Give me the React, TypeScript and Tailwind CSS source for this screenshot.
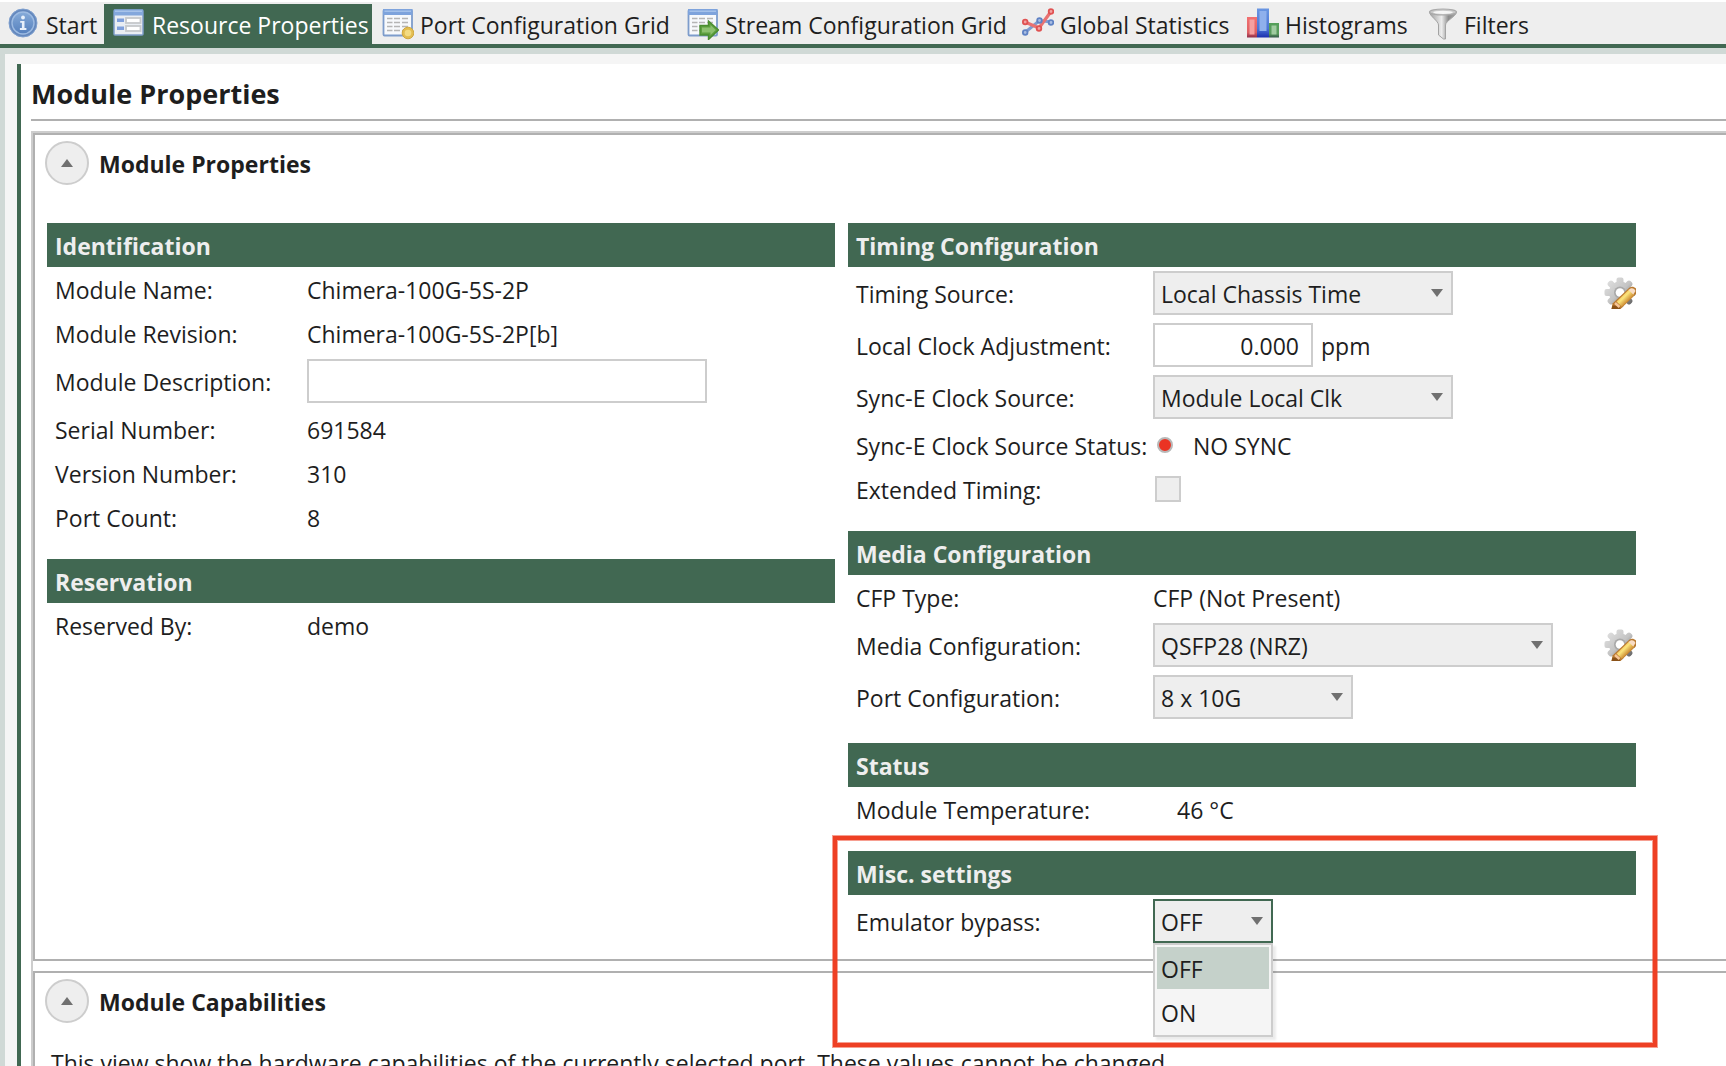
import { useState } from "react";
import type { ReactNode } from "react";

/* ---------- toolbar icons ---------- */

function InfoIcon() {
  return (
    <svg viewBox="0 0 32 32" className="w-8 h-8 shrink-0" aria-hidden="true">
      <defs>
        <linearGradient id="infoFill" x1="0" y1="0" x2="0" y2="1">
          <stop offset="0" stopColor="#86abd9" />
          <stop offset="1" stopColor="#5580bd" />
        </linearGradient>
      </defs>
      <circle cx="15" cy="15" r="14" fill="#6488bd" stroke="#7fa0cf" strokeWidth="1" />
      <circle cx="15" cy="15" r="11" fill="url(#infoFill)" stroke="#9dbbe2" strokeWidth="1.4" />
      <g fill="#e9f1fb">
        <circle cx="15" cy="9.5" r="1.900" />
        <path d="M12.200 13h4.300v7h1.900v1.900h-6.500V20h2v-5.200h-1.700z" />
      </g>
    </svg>
  );
}

function FormIcon() {
  return (
    <svg viewBox="0 0 32 32" className="w-8 h-8 shrink-0" aria-hidden="true">
      <rect x="2" y="2" width="29" height="25" rx="1" fill="#e9edf3" stroke="#7f9dca" strokeWidth="1.500" />
      <rect x="2" y="1.500" width="29" height="6" fill="#83a7dc" />
      <rect x="3" y="2.500" width="27" height="1.500" fill="#a7c3ea" />
      <rect x="5" y="10.500" width="7" height="3.500" fill="#7f9fdc" />
      <rect x="5" y="18.500" width="7" height="3.500" fill="#7f9fdc" />
      <rect x="14" y="10" width="14.500" height="5" fill="#fff" stroke="#c6c8cb" strokeWidth="1.800" />
      <rect x="14" y="18" width="14.500" height="5" fill="#fff" stroke="#c6c8cb" strokeWidth="1.800" />
    </svg>
  );
}

function TableBase() {
  return (
    <>
      <rect x="1.500" y="2" width="28.500" height="25.500" rx="1" fill="#f7f9fc" stroke="#7d9ccb" strokeWidth="1.800" />
      <rect x="1" y="1" width="29.500" height="6" fill="#7ea3dc" />
      <rect x="2.500" y="2.500" width="26.500" height="1.500" fill="#a4c1ea" />
      <path d="M5 10.500h5.500M12 10.500h6M20 10.500h6M5 14.500h5.500M12 14.500h6M20 14.500h6M5 18.500h5.500M12 18.500h6M20 18.500h6M5 22.500h5.500M12 22.500h6M20 22.500h6" stroke="#b5b5b5" strokeWidth="1.700" />
    </>
  );
}

function PortGridIcon() {
  return (
    <svg viewBox="0 0 32 32" className="w-8 h-8 shrink-0" aria-hidden="true">
      <TableBase />
      <circle cx="26" cy="25" r="5.800" fill="#e3bd50" stroke="#d0a840" strokeWidth="1" />
      <circle cx="26" cy="25" r="3.300" fill="#f3db82" />
    </svg>
  );
}

function StreamGridIcon() {
  return (
    <svg viewBox="0 0 32 32" className="w-8 h-8 shrink-0" aria-hidden="true">
      <TableBase />
      <path d="M13 17.500h8.500v-4.500l10 9-10 9.500v-4.500H13z" fill="#5d9f3f" stroke="#4a8d30" strokeWidth="1.400" />
      <path d="M15 19.500h8.500v-2.500l5.300 5-5.300 5v-2.500H15z" fill="#8cc06e" />
    </svg>
  );
}

function StatisticsIcon() {
  return (
    <svg viewBox="0 0 32 32" className="w-8 h-8 shrink-0" aria-hidden="true">
      <path d="M3 24.500L17.500 12.500 29 14" fill="none" stroke="#7f9cd0" strokeWidth="3" />
      <path d="M3 14L17 20 29 3.500" fill="none" stroke="#e87272" strokeWidth="3.200" />
      <g fill="#a9bde2" stroke="#5f82c4" strokeWidth="1.800">
        <circle cx="3.200" cy="24.500" r="2.300" />
        <circle cx="17.500" cy="12.500" r="2.300" />
        <circle cx="29" cy="14.500" r="2.300" />
      </g>
      <g fill="#f3a1a1" stroke="#e05252" strokeWidth="1.800">
        <circle cx="3.200" cy="14" r="2.300" />
        <circle cx="17" cy="20.500" r="2.300" />
        <circle cx="29" cy="3.500" r="2.300" />
      </g>
    </svg>
  );
}

function HistogramIcon() {
  return (
    <svg viewBox="0 0 32 32" className="w-8 h-8 shrink-0" aria-hidden="true">
      <defs>
        <linearGradient id="barRed" x1="0" y1="0" x2="0" y2="1">
          <stop offset="0" stopColor="#f27070" />
          <stop offset="0.750" stopColor="#dd6064" />
          <stop offset="1" stopColor="#8f2f4a" />
        </linearGradient>
        <linearGradient id="barBlue" x1="0" y1="0" x2="0" y2="1">
          <stop offset="0" stopColor="#6a96e2" />
          <stop offset="0.700" stopColor="#4a74d6" />
          <stop offset="1" stopColor="#1c2fae" />
        </linearGradient>
        <linearGradient id="barGreen" x1="0" y1="0" x2="0" y2="1">
          <stop offset="0" stopColor="#559f5a" />
          <stop offset="0.750" stopColor="#599a5d" />
          <stop offset="1" stopColor="#33554a" />
        </linearGradient>
      </defs>
      <rect x="0" y="9" width="10" height="20.500" fill="url(#barRed)" />
      <rect x="2.500" y="11.500" width="5" height="15" fill="#f5a0a0" />
      <rect x="22" y="15" width="10" height="14.500" fill="url(#barGreen)" />
      <rect x="24.500" y="17.500" width="5" height="9" fill="#a0cba1" />
      <rect x="10" y="0.500" width="12" height="29" fill="url(#barBlue)" />
      <rect x="12.500" y="3" width="7" height="20" fill="#8fb0ec" />
    </svg>
  );
}

function FilterIcon() {
  return (
    <svg viewBox="0 0 32 32" className="w-8 h-8 shrink-0" aria-hidden="true">
      <defs>
        <linearGradient id="funnel" x1="0" y1="0" x2="1" y2="0">
          <stop offset="0" stopColor="#9c9c9c" />
          <stop offset="0.450" stopColor="#ededed" />
          <stop offset="0.700" stopColor="#8c8c8c" />
          <stop offset="1" stopColor="#a8a8a8" />
        </linearGradient>
      </defs>
      <path d="M1.500 4C1.500 8 10.500 13 10.500 17v10l5 4h2V17c0-4 11-9 11-13z" fill="url(#funnel)" stroke="#a3a3a3" strokeWidth="1" />
      <ellipse cx="15" cy="4" rx="13.500" ry="3" fill="#c9c9c9" stroke="#a9a9a9" strokeWidth="1.200" />
      <ellipse cx="15" cy="4.300" rx="10" ry="1.600" fill="#f6f6f6" />
    </svg>
  );
}

function GearPencilIcon() {
  return (
    <svg viewBox="0 0 32 32" className="w-8 h-8" aria-hidden="true">
      <defs>
        <linearGradient id="gearFill" gradientUnits="userSpaceOnUse" x1="4" y1="3" x2="28" y2="28">
          <stop offset="0" stopColor="#dedede" />
          <stop offset="0.500" stopColor="#c4c4c4" />
          <stop offset="1" stopColor="#5e5e5e" />
        </linearGradient>
        <linearGradient id="pencilFill" gradientUnits="userSpaceOnUse" x1="16" y1="17" x2="24" y2="25">
          <stop offset="0" stopColor="#eda94a" />
          <stop offset="0.450" stopColor="#fbe57c" />
          <stop offset="1" stopColor="#c8832c" />
        </linearGradient>
      </defs>
      <g fill="url(#gearFill)">
        <circle cx="16" cy="15.500" r="11" />
        <path d="M12.500 6V2.500q0-2 2-2h3q2 0 2 2V6zM12.500 25v3.500q0 2 2 2h3q2 0 2-2V25zM6.500 12H2.500q-2 0-2 2v3q0 2 2 2h4zM25.500 12h4q2 0 2 2v3q0 2-2 2h-4zM7 11.500L4 8.500q-1.200-1.500 0-3L5.500 4q1.500-1.200 3 0l3 3zM25 11.500l3-3q1.200-1.500 0-3L26.500 4q-1.500-1.200-3 0l-3 3zM7 19.500l-3 3q-1.200 1.500 0 3L5.500 27q1.500 1.200 3 0l3-3zM25 19.500l3 3q1.200 1.500 0 3L26.500 27q-1.500 1.200-3 0l-3-3z" />
      </g>
      <circle cx="16" cy="15.500" r="6" fill="#a9a9a9" />
      <circle cx="16" cy="15.500" r="4.300" fill="#fff" />
      <path d="M7.500 32l1-5.500L25.500 10.500c2-1.500 4.500-1 6.500 1v5.500L16.500 32z" fill="#b9792f" />
      <path d="M12.500 24.500L25 12.500l5.500 5.500-12.500 12z" fill="url(#pencilFill)" />
      <path d="M24.500 13l2-1.500c2-1 4.500.5 5 2.500l-2.200 3.500z" fill="#f8dcc4" />
      <path d="M7.500 32l1-3.500 6 .5 2 3z" fill="#8a5218" />
      <path d="M11 26l4.500 4" stroke="#f6c596" strokeWidth="2.500" />
    </svg>
  );
}

/* ---------- building blocks ---------- */

const TABS = [
  { label: "Start", icon: <InfoIcon />, size: "w-[104px] pl-2 gap-1.5" },
  { label: "Resource Properties", icon: <FormIcon />, size: "w-[268px] pl-2 gap-2" },
  { label: "Port Configuration Grid", icon: <PortGridIcon />, size: "w-[305px] pl-2.5 gap-1.5" },
  { label: "Stream Configuration Grid", icon: <StreamGridIcon />, size: "w-[335px] pl-2.5 gap-1.5" },
  { label: "Global Statistics", icon: <StatisticsIcon />, size: "w-[225px] pl-2.5 gap-1.5" },
  { label: "Histograms", icon: <HistogramIcon />, size: "w-[181px] pl-2.5 gap-1.5" },
  { label: "Filters", icon: <FilterIcon />, size: "w-[120px] pl-2.5 gap-1" },
];

function GroupTitle({ children }: { children: ReactNode }) {
  return (
    <h3 className="h-11 px-2 pt-0.5 flex items-center bg-[#416852] text-[#eeeeee] text-[23px] font-bold">
      {children}
    </h3>
  );
}

function Row({ label, htmlFor, tall, side, children }: {
  label: string;
  htmlFor?: string;
  tall?: boolean;
  side?: boolean;
  children: ReactNode;
}) {
  return (
    <div className={`flex items-center ${tall ? "h-[52px]" : "h-11"}`}>
      <label htmlFor={htmlFor} className={`pl-2 pt-0.5 shrink-0 whitespace-nowrap ${side ? "w-[305px]" : "w-[260px]"}`}>
        {label}
      </label>
      {children}
    </div>
  );
}

function Value({ children }: { children: ReactNode }) {
  return <span className="pt-0.5 whitespace-nowrap">{children}</span>;
}

function Combo({ id, value, onChange, options, width, open, onToggle }: {
  id: string;
  value: string;
  onChange: (v: string) => void;
  options: string[];
  width: string;
  open?: boolean;
  onToggle?: () => void;
}) {
  return (
    <div className={`relative ${width}`}>
      <select
        id={id}
        value={value}
        onChange={e => onChange(e.target.value)}
        onMouseDown={e => {
          if (onToggle) {
            e.preventDefault();
            onToggle();
          }
        }}
        className={`appearance-none block w-full h-11 pl-1.5 pr-8 pt-0.5 border-2 bg-[#eeeeee] outline-none ${open ? "border-[#416852]" : "border-[#cdcdcd]"}`}
      >
        {options.map(o => <option key={o}>{o}</option>)}
      </select>
      <svg viewBox="0 0 12 8" className="absolute right-2.5 top-[18px] w-3 h-2 pointer-events-none" aria-hidden="true">
        <path d="M0 0h12L6 8z" fill="#707070" />
      </svg>
      {open && (
        <ul className="absolute z-10 left-0 top-full w-full p-0.5 flex flex-col gap-0.5 border-2 border-[#cdcdcd] bg-[#f5f5f5] shadow-[3px_3px_2px_rgba(0,0,0,0.08)]">
          {options.map(o => (
            <li key={o}>
              <button
                onClick={() => onChange(o)}
                className={`block w-full h-[42px] pl-1 pt-0.5 text-left ${o === value ? "bg-[#c5d1ca]" : ""}`}
              >
                {o}
              </button>
            </li>
          ))}
        </ul>
      )}
    </div>
  );
}

function SettingsButton({ label }: { label: string }) {
  return (
    <button aria-label={label} className="ml-auto">
      <GearPencilIcon />
    </button>
  );
}

function PanelHeader({ title, onClick }: { title: string; onClick: () => void }) {
  return (
    <div className="flex items-center gap-2.5 pl-2.5 pt-1.5">
      <button
        onClick={onClick}
        aria-label={`Toggle ${title}`}
        className="w-11 h-11 rounded-full border-2 border-[#cdcdcd] bg-[#eeeeee] flex items-center justify-center"
      >
        <svg viewBox="0 0 12 8" className="w-3 h-2" aria-hidden="true">
          <path d="M0 8h12L6 0z" fill="#707070" />
        </svg>
      </button>
      <h2 className="pt-0.5 text-[23px] font-bold">{title}</h2>
    </div>
  );
}

/* ---------- page ---------- */

export default function App() {
  const [tab, setTab] = useState("Resource Properties");
  const [showProps, setShowProps] = useState(true);
  const [showCaps, setShowCaps] = useState(true);
  const [description, setDescription] = useState("");
  const [timing, setTiming] = useState("Local Chassis Time");
  const [clockAdj, setClockAdj] = useState("0.000");
  const [syncE, setSyncE] = useState("Module Local Clk");
  const [extended, setExtended] = useState(false);
  const [media, setMedia] = useState("QSFP28 (NRZ)");
  const [ports, setPorts] = useState("8 x 10G");
  const [bypass, setBypass] = useState("OFF");
  const [bypassOpen, setBypassOpen] = useState(true);

  return (
    <div className="h-screen flex flex-col overflow-hidden bg-[#d0d9d6] text-[#1e1e1e] text-[23px] leading-8 font-['Open_Sans','Noto_Sans',sans-serif]">
      {/* Tabs */}
      <nav className="shrink-0 flex h-12 pt-0.5 border-t-2 border-t-white border-b-4 border-b-[#416852] bg-[#eeeeee]">
        {TABS.map(t => (
          <button
            key={t.label}
            onClick={() => setTab(t.label)}
            className={`shrink-0 flex items-center whitespace-nowrap ${t.size} ${tab === t.label ? "bg-[#416852] text-white" : ""}`}
          >
            {t.icon}
            <span className="pt-0.5">{t.label}</span>
          </button>
        ))}
      </nav>

      <div className="flex-1 min-h-0 mt-1.5 ml-[5px] pt-2.5 pl-3 bg-[#f5f5f5]">
        <main className="h-full pl-2.5 border-l-4 border-[#416852] bg-white">
          <h1 className="h-[57px] pt-3.5 border-b-2 border-[#b0b0b0] text-[27px] font-bold">Module Properties</h1>

          <div className="mt-2.5 border-l-2 border-t-2 border-[#cdcdcd]">
            {/* Module Properties */}
            <section className="border-2 border-r-0 border-[#b0b0b0]">
              <PanelHeader title="Module Properties" onClick={() => setShowProps(!showProps)} />
              {showProps && (
                <div className="grid grid-cols-[minmax(0,788px)_minmax(0,788px)] gap-x-[13px] items-start pt-[38px] pl-3 pb-3">
                  <div className="flex flex-col gap-5">
                    <section>
                      <GroupTitle>Identification</GroupTitle>
                      <Row label="Module Name:"><Value>Chimera-100G-5S-2P</Value></Row>
                      <Row label="Module Revision:"><Value>Chimera-100G-5S-2P[b]</Value></Row>
                      <Row label="Module Description:" htmlFor="description" tall>
                        <input
                          id="description"
                          value={description}
                          onChange={e => setDescription(e.target.value)}
                          className="w-[400px] h-11 px-2 border-2 border-[#cdcdcd] bg-white outline-none"
                        />
                      </Row>
                      <Row label="Serial Number:"><Value>691584</Value></Row>
                      <Row label="Version Number:"><Value>310</Value></Row>
                      <Row label="Port Count:"><Value>8</Value></Row>
                    </section>
                    <section>
                      <GroupTitle>Reservation</GroupTitle>
                      <Row label="Reserved By:"><Value>demo</Value></Row>
                    </section>
                  </div>

                  <div className="flex flex-col gap-5">
                    <section>
                      <GroupTitle>Timing Configuration</GroupTitle>
                      <Row label="Timing Source:" htmlFor="timing" tall side>
                        <Combo id="timing" value={timing} onChange={setTiming} options={["Local Chassis Time"]} width="w-[300px]" />
                        <SettingsButton label="Timing settings" />
                      </Row>
                      <Row label="Local Clock Adjustment:" htmlFor="clock" tall side>
                        <input
                          id="clock"
                          value={clockAdj}
                          onChange={e => setClockAdj(e.target.value)}
                          className="w-40 h-11 pr-3 pt-0.5 mr-2 border-2 border-[#cdcdcd] bg-white text-right outline-none"
                        />
                        <Value>ppm</Value>
                      </Row>
                      <Row label="Sync-E Clock Source:" htmlFor="synce" tall side>
                        <Combo id="synce" value={syncE} onChange={setSyncE} options={["Module Local Clk"]} width="w-[300px]" />
                      </Row>
                      <Row label="Sync-E Clock Source Status:" side>
                        <span className="w-4 h-4 ml-1 mr-5 rounded-full border-2 border-[#b8b8b8] bg-[#ea3323]" />
                        <Value>NO SYNC</Value>
                      </Row>
                      <Row label="Extended Timing:" htmlFor="extended" side>
                        <input
                          id="extended"
                          type="checkbox"
                          checked={extended}
                          onChange={e => setExtended(e.target.checked)}
                          className="appearance-none w-[26px] h-[26px] ml-0.5 border-2 border-[#cdcdcd] bg-[#eeeeee] checked:bg-[#416852]"
                        />
                      </Row>
                    </section>

                    <section>
                      <GroupTitle>Media Configuration</GroupTitle>
                      <Row label="CFP Type:" side><Value>CFP (Not Present)</Value></Row>
                      <Row label="Media Configuration:" htmlFor="media" tall side>
                        <Combo id="media" value={media} onChange={setMedia} options={["QSFP28 (NRZ)"]} width="w-[400px]" />
                        <SettingsButton label="Media settings" />
                      </Row>
                      <Row label="Port Configuration:" htmlFor="ports" tall side>
                        <Combo id="ports" value={ports} onChange={setPorts} options={["8 x 10G"]} width="w-[200px]" />
                      </Row>
                    </section>

                    <section>
                      <GroupTitle>Status</GroupTitle>
                      <Row label="Module Temperature:" side>
                        <span className="pl-6 pt-0.5">46 °C</span>
                      </Row>
                    </section>

                    <section className="relative">
                      {/* highlight frame, runs over the next panel */}
                      <div className="absolute z-20 -left-[15px] -right-[21px] -top-[15px] h-[211px] border-4 border-[#ee4024] shadow-[0_0_0_1px_rgba(238,64,36,0.5),inset_0_0_0_1px_rgba(238,64,36,0.5)] pointer-events-none" />
                      <GroupTitle>Misc. settings</GroupTitle>
                      <Row label="Emulator bypass:" htmlFor="bypass" tall side>
                        <Combo
                          id="bypass"
                          value={bypass}
                          onChange={v => { setBypass(v); setBypassOpen(false); }}
                          options={["OFF", "ON"]}
                          width="w-[120px]"
                          open={bypassOpen}
                          onToggle={() => setBypassOpen(!bypassOpen)}
                        />
                      </Row>
                    </section>
                  </div>
                </div>
              )}
            </section>

            {/* Module Capabilities */}
            <section className="mt-2.5 border-2 border-r-0 border-b-0 border-[#b0b0b0]">
              <PanelHeader title="Module Capabilities" onClick={() => setShowCaps(!showCaps)} />
              {showCaps && (
                <p className="pl-4 pt-6 whitespace-nowrap">
                  This view show the hardware capabilities of the currently selected port. These values cannot be changed.
                </p>
              )}
            </section>
          </div>
        </main>
      </div>
    </div>
  );
}
